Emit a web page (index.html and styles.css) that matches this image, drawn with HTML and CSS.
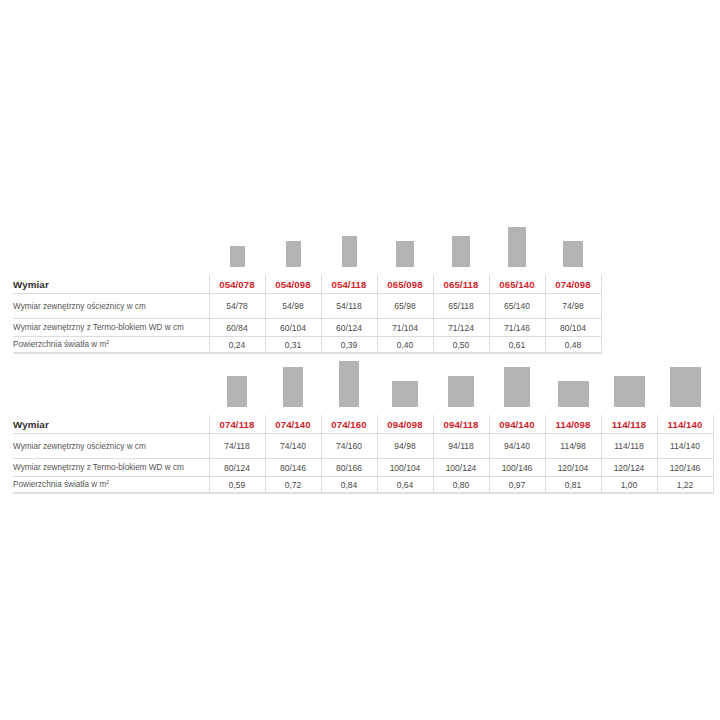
FILE: index.html
```html
<!DOCTYPE html>
<html lang="pl">
<head>
<meta charset="utf-8">
<title>Wymiary</title>
<link rel="stylesheet" href="styles.css">
</head>
<body>
<main class="page">
  <section class="block block-1">
    <div class="bars cols-7">
      <div class="bar-label"></div>
      <div class="bar-cell"><span class="bar" style="width:15px;height:21px"></span></div>
      <div class="bar-cell"><span class="bar" style="width:15px;height:26px"></span></div>
      <div class="bar-cell"><span class="bar" style="width:15px;height:31px"></span></div>
      <div class="bar-cell"><span class="bar" style="width:18px;height:26px"></span></div>
      <div class="bar-cell"><span class="bar" style="width:18px;height:31px"></span></div>
      <div class="bar-cell"><span class="bar" style="width:18px;height:40px"></span></div>
      <div class="bar-cell"><span class="bar" style="width:20px;height:26px"></span></div>
    </div>
    <table class="spec">
      <colgroup><col class="c-label"><col span="7" class="c-num"></colgroup>
      <tr class="head">
        <th class="label">Wymiar</th>
        <th>054/078</th><th>054/098</th><th>054/118</th><th>065/098</th><th>065/118</th><th>065/140</th><th>074/098</th>
      </tr>
      <tr class="r2">
        <td class="label">Wymiar zewnętrzny ościeżnicy w cm</td>
        <td>54/78</td><td>54/98</td><td>54/118</td><td>65/98</td><td>65/118</td><td>65/140</td><td>74/98</td>
      </tr>
      <tr class="r3">
        <td class="label">Wymiar zewnętrzny z Termo-blokiem WD w cm</td>
        <td>60/84</td><td>60/104</td><td>60/124</td><td>71/104</td><td>71/124</td><td>71/146</td><td>80/104</td>
      </tr>
      <tr class="r4">
        <td class="label">Powierzchnia światła w m<sup>2</sup></td>
        <td>0,24</td><td>0,31</td><td>0,39</td><td>0,40</td><td>0,50</td><td>0,61</td><td>0,48</td>
      </tr>
    </table>
  </section>

  <section class="block block-2">
    <div class="bars cols-9">
      <div class="bar-label"></div>
      <div class="bar-cell"><span class="bar" style="width:20px;height:31px"></span></div>
      <div class="bar-cell"><span class="bar" style="width:20px;height:40px"></span></div>
      <div class="bar-cell"><span class="bar" style="width:20px;height:46px"></span></div>
      <div class="bar-cell"><span class="bar" style="width:26px;height:26px"></span></div>
      <div class="bar-cell"><span class="bar" style="width:26px;height:31px"></span></div>
      <div class="bar-cell"><span class="bar" style="width:26px;height:40px"></span></div>
      <div class="bar-cell"><span class="bar" style="width:31px;height:26px"></span></div>
      <div class="bar-cell"><span class="bar" style="width:31px;height:31px"></span></div>
      <div class="bar-cell"><span class="bar" style="width:31px;height:40px"></span></div>
    </div>
    <table class="spec">
      <colgroup><col class="c-label"><col span="9" class="c-num"></colgroup>
      <tr class="head">
        <th class="label">Wymiar</th>
        <th>074/118</th><th>074/140</th><th>074/160</th><th>094/098</th><th>094/118</th><th>094/140</th><th>114/098</th><th>114/118</th><th>114/140</th>
      </tr>
      <tr class="r2">
        <td class="label">Wymiar zewnętrzny ościeżnicy w cm</td>
        <td>74/118</td><td>74/140</td><td>74/160</td><td>94/98</td><td>94/118</td><td>94/140</td><td>114/98</td><td>114/118</td><td>114/140</td>
      </tr>
      <tr class="r3">
        <td class="label">Wymiar zewnętrzny z Termo-blokiem WD w cm</td>
        <td>80/124</td><td>80/146</td><td>80/166</td><td>100/104</td><td>100/124</td><td>100/146</td><td>120/104</td><td>120/124</td><td>120/146</td>
      </tr>
      <tr class="r4">
        <td class="label">Powierzchnia światła w m<sup>2</sup></td>
        <td>0,59</td><td>0,72</td><td>0,84</td><td>0,64</td><td>0,80</td><td>0,97</td><td>0,81</td><td>1,00</td><td>1,22</td>
      </tr>
    </table>
  </section>
</main>
</body>
</html>
```

FILE: styles.css
```css
html, body {
  margin: 0;
  padding: 0;
  background: #ffffff;
}

.page {
  padding: 221px 0 0 13px;
  font-family: "Liberation Sans", Arial, sans-serif;
  color: #4a4a4a;
}

.block-2 {
  margin-top: 7px;
}

.bars {
  display: grid;
  height: 46px;
  margin-bottom: 8px;
  align-items: end;
}

.cols-7 {
  grid-template-columns: 196px repeat(7, 56px);
}

.cols-9 {
  grid-template-columns: 196px repeat(9, 56px);
}

.bar-cell {
  display: flex;
  justify-content: center;
  align-items: flex-end;
  height: 46px;
}

.bar {
  display: block;
  background: #b3b3b3;
}

.spec {
  border-collapse: collapse;
  table-layout: fixed;
  width: auto;
}

.c-label {
  width: 196px;
}

.c-num {
  width: 56px;
}

.spec th,
.spec td {
  padding: 0;
  text-align: center;
  vertical-align: middle;
  border-left: 1px solid #dcdcdc;
  white-space: nowrap;
  overflow: visible;
}

.spec th:last-child,
.spec td:last-child {
  border-right: 1px solid #dcdcdc;
}

.spec .label {
  text-align: left;
  border-left: none;
}

.spec tr {
  border-bottom: 1px solid #dcdcdc;
}

.spec tr.r4 {
  border-bottom: 2px solid #e0e0e0;
}

.head th {
  height: 18px;
  font-size: 9.6px;
  font-weight: bold;
  color: #d2232a;
  letter-spacing: 0.1px;
}

.head th.label {
  color: #2e2e2e;
  font-size: 9.8px;
}

.r2 td {
  height: 24px;
}

.r3 td {
  height: 17px;
}

.r4 td {
  height: 15px;
}

.spec td {
  font-size: 8.5px;
  color: #4a4a4a;
}

.spec td.label {
  font-size: 8.2px;
  color: #555555;
}

.spec sup {
  font-size: 5px;
  line-height: 0;
  vertical-align: 3px;
}
```
